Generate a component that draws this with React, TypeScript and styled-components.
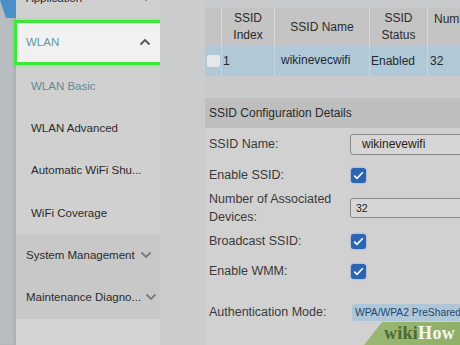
import React from "react";
import styled, {createGlobalStyle} from "styled-components";

const Global = createGlobalStyle`
  html, body {
    margin: 0;
    padding: 0;
    background: #c9cacc;
  }
  * {
    box-sizing: border-box;
  }
`;

const Page = styled.div`
  width: 460px;
  height: 345px;
  overflow: hidden;
  display: flex;
  flex-direction: row;
  font-family: "Liberation Sans", Arial, sans-serif;
  background: #c9cacc;
  position: relative;
`;

const Strip = styled.div`
  width: 16px;
  flex: none;
  background: #b7bdc1;
  box-shadow: inset -2px 0 3px rgba(0, 0, 0, 0.08);
`;

const Sidebar = styled.div`
  width: 144px;
  flex: none;
  display: flex;
  flex-direction: column;
  background: #d0d0d0;
  margin-top: -23px;
  height: 368px;
`;

const MenuItem = styled.div<{$tone?: string; $indent?: number; $dark?: boolean}>`
  height: ${(p) => (p.$indent ? "42.3px" : "42.5px")};
  flex: none;
  display: flex;
  align-items: center;
  justify-content: space-between;
  gap: 4px;
  padding: 0 8px 0 ${(p) => p.$indent ?? 10}px;
  font-size: 11.5px;
  color: ${(p) => p.$tone ?? "#2b2b2b"};
  background: ${(p) => (p.$dark ? "#c8c8c8" : "transparent")};
  white-space: nowrap;
`;

const ActiveItem = styled.div`
  height: 45px;
  flex: none;
  margin: 0 -4px 0 -2px;
  border: 3px solid #3ee83a;
  box-shadow: 0 0 3px #5df55a;
  background: #f0f1f0;
  display: flex;
  align-items: center;
  justify-content: space-between;
  padding: 0 10px 0 9px;
  font-size: 11.5px;
  color: #5e9ba6;
`;

const SidebarRest = styled.div`
  flex: 1;
  background: #d3d3d3;
`;

const Gutter = styled.div`
  width: 45px;
  flex: none;
  background: #cbcccd;
`;

const Main = styled.div`
  flex: 1;
  display: flex;
  flex-direction: column;
  overflow: hidden;
  padding-top: 8px;
`;

const Table = styled.div`
  width: 300px;
  display: grid;
  grid-template-columns: 17px 53px 95px 58px 77px;
  grid-template-rows: 38px 30px;
`;

const HeadCell = styled.div<{$left?: boolean}>`
  background: #c4c4c4;
  border-right: 1px solid #d8d8d8;
  display: flex;
  align-items: ${(p) => (p.$left ? "flex-start" : "center")};
  justify-content: ${(p) => (p.$left ? "flex-start" : "center")};
  padding: ${(p) => (p.$left ? "3px 0 0 6px" : "0")};
  text-align: center;
  font-size: 12px;
  line-height: 17px;
  color: #2b2b2b;
  white-space: nowrap;
  overflow: hidden;
`;

const BodyCell = styled.div<{$pad?: number}>`
  background: #b1c8d6;
  border-right: 1px solid #c6d6e0;
  display: flex;
  align-items: center;
  padding-left: ${(p) => p.$pad ?? 1}px;
  font-size: 12px;
  color: #1f2a30;
`;

const RowBox = styled.div`
  width: 13px;
  height: 12px;
  margin-left: 1px;
  background: #e4e8ea;
  border-radius: 2px;
`;

const Section = styled.div`
  margin-top: 22px;
  background: #d1d1d1;
  flex: 1;
  display: flex;
  flex-direction: column;
`;

const SectionHead = styled.div`
  height: 30px;
  background: #bebebe;
  display: flex;
  align-items: center;
  padding-left: 4px;
  font-size: 12px;
  color: #2b2b2b;
`;

const FormRow = styled.div<{$h: number}>`
  height: ${(p) => p.$h}px;
  display: grid;
  grid-template-columns: 141px 1fr;
  align-items: center;
  padding-left: 4px;
  font-size: 12.5px;
  color: #3a3a3a;
`;

const Label = styled.div`
  line-height: 18px;
`;

const TextBox = styled.div<{$small?: boolean}>`
  height: ${(p) => (p.$small ? 20 : 21)}px;
  margin-right: -10px;
  border: 1px solid #8a8a8a;
  border-radius: 3px;
  background: #d6d6d6;
  display: flex;
  align-items: center;
  padding-left: ${(p) => (p.$small ? 5 : 11)}px;
  font-size: ${(p) => (p.$small ? 10.5 : 12)}px;
  color: #1e1e1e;
`;

const Check = styled.div`
  width: 15px;
  height: 15px;
  margin-left: 1px;
  border-radius: 3px;
  background: #2c64b4;
  box-shadow: 0 0 2px #6c95d8;
  display: flex;
  align-items: center;
  justify-content: center;
`;

const Select = styled.div`
  height: 17px;
  margin-left: 2px;
  margin-right: -20px;
  border-radius: 3px;
  background: #aec6d8;
  display: flex;
  align-items: center;
  padding-left: 3px;
  font-size: 10.3px;
  color: #23466e;
  white-space: nowrap;
  overflow: hidden;
`;

const Logo = styled.div`
  position: absolute;
  right: 0;
  bottom: 0;
  width: 96px;
  height: 23px;
  background: linear-gradient(90deg, #9ab873, #8fae67);
  clip-path: polygon(18px 0, 100% 0, 100% 100%, 0 100%);
  display: flex;
  align-items: center;
  justify-content: flex-end;
  padding-right: 5px;
  font-family: "Liberation Serif", "Times New Roman", serif;
  font-weight: bold;
  font-size: 18px;
  letter-spacing: 0.3px;
`;

const Wiki = styled.span`
  color: #4e6b33;
`;

const How = styled.span`
  color: #f4f7ef;
`;

const Chevron = ({up}: {up?: boolean}) => (
  <svg width="12" height="8" viewBox="0 0 12 8" style={{flex: "none"}}>
    <path
      d={up ? "M1.5 6.5 L6 2 L10.5 6.5" : "M1.5 1.5 L6 6 L10.5 1.5"}
      fill="none"
      stroke={up ? "#555" : "#7b7b7b"}
      strokeWidth="1.8"
    />
  </svg>
);

const Tick = () => (
  <svg width="11" height="9" viewBox="0 0 11 9">
    <path d="M1.2 4.6 L4 7.4 L9.8 1.3" fill="none" stroke="#fff" strokeWidth="1.6" />
  </svg>
);

const Corner = () => (
  <svg width="16" height="20" viewBox="0 0 16 20" style={{display: "block"}}>
    <polygon points="0,0 16,0 16,18 6,18" fill="#4a8fc7" />
  </svg>
);

export default function App() {
  return (
    <Page>
      <Global />
      <Strip>
        <Corner />
      </Strip>
      <Sidebar>
        <MenuItem>
          Application
          <Chevron />
        </MenuItem>
        <ActiveItem>
          WLAN
          <Chevron up />
        </ActiveItem>
        <MenuItem $indent={15} $tone="#5f8b95">WLAN Basic</MenuItem>
        <MenuItem $indent={15}>WLAN Advanced</MenuItem>
        <MenuItem $indent={15}>Automatic WiFi Shu...</MenuItem>
        <MenuItem $indent={15}>WiFi Coverage</MenuItem>
        <MenuItem $dark>
          System Management
          <Chevron />
        </MenuItem>
        <MenuItem $dark>
          Maintenance Diagno...
          <Chevron />
        </MenuItem>
        <SidebarRest />
      </Sidebar>
      <Gutter />
      <Main>
        <Table>
          <HeadCell />
          <HeadCell>
            SSID
            <br />
            Index
          </HeadCell>
          <HeadCell>SSID Name</HeadCell>
          <HeadCell>
            SSID
            <br />
            Status
          </HeadCell>
          <HeadCell $left>Number</HeadCell>
          <BodyCell>
            <RowBox />
          </BodyCell>
          <BodyCell>1</BodyCell>
          <BodyCell $pad={6} style={{paddingBottom: 3}}>
            wikinevecwifi
          </BodyCell>
          <BodyCell>Enabled</BodyCell>
          <BodyCell $pad={2}>32</BodyCell>
        </Table>
        <Section>
          <SectionHead>SSID Configuration Details</SectionHead>
          <FormRow $h={32}>
            <Label>SSID Name:</Label>
            <TextBox>wikinevewifi</TextBox>
          </FormRow>
          <FormRow $h={30}>
            <Label>Enable SSID:</Label>
            <Check>
              <Tick />
            </Check>
          </FormRow>
          <FormRow $h={34}>
            <Label>
              Number of Associated
              <br />
              Devices:
            </Label>
            <TextBox $small>32</TextBox>
          </FormRow>
          <FormRow $h={34}>
            <Label>Broadcast SSID:</Label>
            <Check>
              <Tick />
            </Check>
          </FormRow>
          <FormRow $h={26}>
            <Label>Enable WMM:</Label>
            <Check>
              <Tick />
            </Check>
          </FormRow>
          <FormRow $h={56}>
            <Label>Authentication Mode:</Label>
            <Select>WPA/WPA2 PreSharedKey</Select>
          </FormRow>
        </Section>
      </Main>
      <Logo>
        <Wiki>wiki</Wiki>
        <How>How</How>
      </Logo>
    </Page>
  );
}
